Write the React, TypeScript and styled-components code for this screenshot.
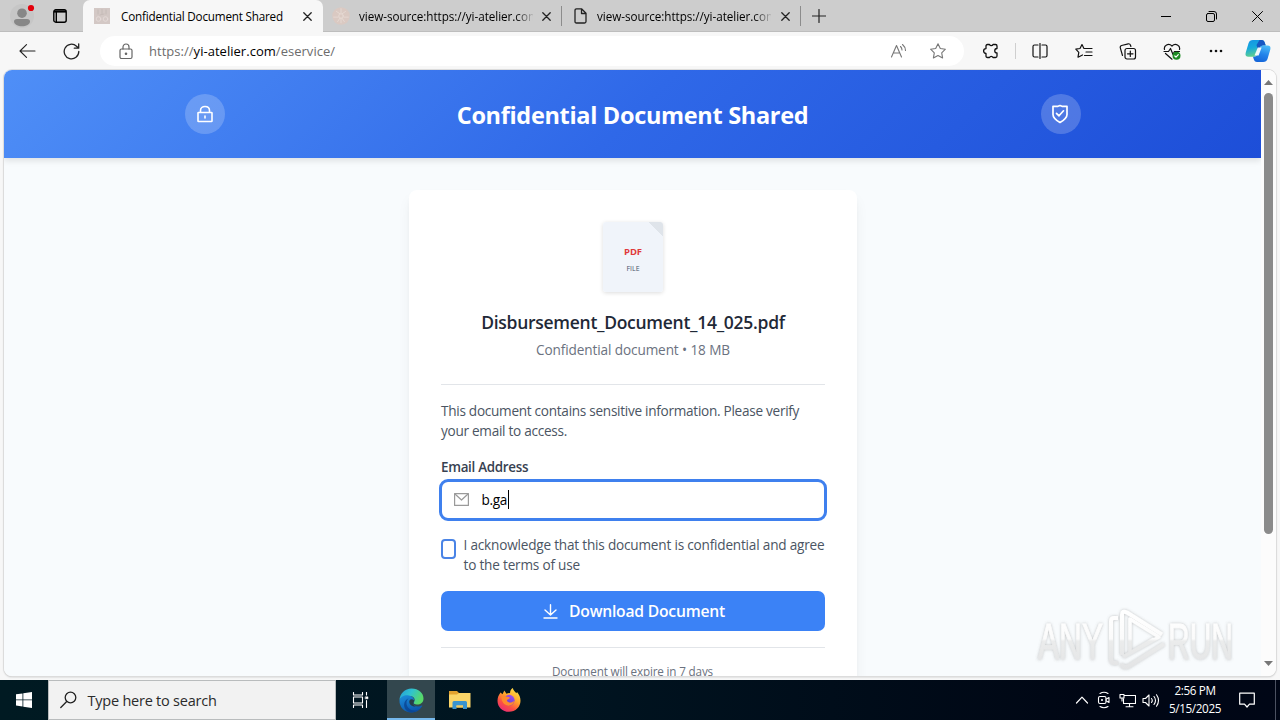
import React from "react";
import styled, { createGlobalStyle } from "styled-components";

const GlobalStyle = createGlobalStyle`
  * { box-sizing: border-box; }
  body { margin: 0; overflow: hidden; font-family: "Open Sans", "Noto Sans", sans-serif; }
  svg { display: block; flex: none; }
`;

const Screen = styled.div`
  width: 1280px;
  height: 720px;
  display: flex;
  flex-direction: column;
  background: #f7f7f7;
  overflow: hidden;
`;

/* Browser chrome */
const TabStrip = styled.div`
  height: 32px;
  flex: none;
  display: flex;
  background: #cdcdcd;
  box-shadow: inset 0 -1px 0 #bdbdbd;
`;
const ProfileArea = styled.div`
  width: 83px;
  display: flex;
  align-items: center;
  padding-left: 10px;
  gap: 18px;
`;
const Tab = styled.div<{ $active?: boolean; $width: number; $gap: number; $pad: number }>`
  width: ${(p) => p.$width}px;
  height: 32px;
  display: flex;
  align-items: center;
  padding: 0 ${(p) => (p.$active ? 11 : 10)}px 0 ${(p) => p.$pad}px;
  gap: ${(p) => p.$gap}px;
  background: ${(p) => (p.$active ? "#f7f7f7" : "transparent")};
  border-radius: ${(p) => (p.$active ? "7px 7px 0 0" : "0")};
  color: #000;
`;
const TabTitle = styled.span<{ $fade?: boolean }>`
  flex: 1;
  overflow: hidden;
  white-space: nowrap;
  font-size: 11.7px;
  line-height: 18px;
  letter-spacing: ${(p) => (p.$fade ? -0.05 : -0.2)}px;
  ${(p) => p.$fade && "mask-image: linear-gradient(to right, #000 90%, transparent 101%);"}
`;
const TabDivider = styled.i`
  width: 1px;
  height: 20px;
  margin-top: 6px;
  background: #8c8c8c;
`;
const NewTab = styled.div`
  display: flex;
  align-items: center;
  padding-left: 11px;
`;
const WindowButtons = styled.div`
  margin-left: auto;
  display: flex;
  align-items: center;
  gap: 35px;
  padding-right: 17px;
`;

const Toolbar = styled.div`
  height: 38px;
  flex: none;
  display: flex;
  align-items: center;
`;
const NavButtons = styled.div`
  width: 100px;
  display: flex;
  align-items: center;
  gap: 27px;
  padding-left: 19px;
`;
const AddressBar = styled.div`
  width: 864px;
  height: 30px;
  border-radius: 15px;
  background: #fff;
  display: flex;
  align-items: center;
  padding: 0 18px 0 18px;
`;
const Url = styled.span`
  margin-left: 15px;
  flex: 1;
  font-size: 13px;
  line-height: 20px;
  letter-spacing: 0.03px;
  color: #6c6c6c;
  b { font-weight: 400; color: #000; }
`;
const BarIcons = styled.div`
  display: flex;
  gap: 22px;
`;
const ToolIcons = styled.div`
  flex: 1;
  display: flex;
  align-items: center;
`;
const ToolSlot = styled.span<{ $lead?: boolean }>`
  width: ${(p) => (p.$lead ? 51 : 44)}px;
  padding-left: ${(p) => (p.$lead ? 3 : 0)}px;
  display: flex;
  justify-content: center;
`;
const ToolDivider = styled.i`
  width: 1px;
  height: 16px;
  margin-right: 2px;
  background: #cfcfcf;
`;
const CopilotSlot = styled.span`
  margin-left: 7px;
`;

/* Web page viewport */
const Viewport = styled.div`
  width: 1272px;
  height: 606px;
  flex: none;
  margin-left: 4px;
  display: flex;
  position: relative;
  border-radius: 8px;
  overflow: hidden;
  box-shadow: 0 0 0 1px #dcdcdc, 0 1px 2px #b8b8b8;
  background: #fff;
`;
const Frame = styled.div`
  height: 610px;
  flex: none;
`;
const Page = styled.div`
  width: 1257px;
  height: 606px;
  background: #f8fbfd;
  overflow: hidden;
  display: flex;
  flex-direction: column;
  align-items: center;
`;
const PageHeader = styled.header`
  width: 100%;
  height: 88px;
  flex: none;
  display: flex;
  align-items: center;
  justify-content: space-between;
  padding: 0 180px 0 181px;
  color: #fff;
  background: linear-gradient(135deg, #4f8ff7 0%, #2f68e8 50%, #1d4ed8 100%);
  box-shadow: 0 3px 6px rgba(0, 0, 0, 0.1);
`;
const HeaderBadge = styled.div`
  width: 40px;
  height: 40px;
  border-radius: 50%;
  display: grid;
  place-items: center;
  padding-right: 1px;
  background: rgba(255, 255, 255, 0.2);
`;
const HeaderTitle = styled.h1`
  margin: 1px 1px 0 0;
  font-size: 23.5px;
  line-height: 32px;
  font-weight: 700;
  letter-spacing: -0.32px;
`;
const Card = styled.main`
  width: 448px;
  height: 560px;
  flex: none;
  margin-top: 32px;
  padding: 32px 32px 0;
  border-radius: 8px;
  background: #fff;
  box-shadow: 0 8px 15px -3px rgba(0, 0, 0, 0.08), 0 4px 6px -2px rgba(0, 0, 0, 0.04);
  display: flex;
  flex-direction: column;
`;
const FileIcon = styled.div`
  width: 60px;
  height: 70px;
  margin: 0 auto;
  border-radius: 3px;
  background: linear-gradient(225deg, #dfe4ea 0 10px, #f0f4fa 10.5px);
  box-shadow: 0 1px 4px rgba(0, 0, 0, 0.14);
  display: flex;
  flex-direction: column;
  align-items: center;
  padding: 23px 0 0 1px;
`;
const FileKind = styled.span`
  font-size: 9.5px;
  line-height: 14px;
  font-weight: 700;
  letter-spacing: -0.1px;
  color: #e03a3a;
`;
const FileWord = styled.span`
  margin-top: 3px;
  font-size: 7px;
  line-height: 13px;
  color: #475569;
`;
const FileName = styled.h2`
  margin: 16px 0 0 1px;
  text-align: center;
  font-size: 17.5px;
  line-height: 28px;
  font-weight: 570;
  letter-spacing: -0.28px;
  color: #1f2937;
  white-space: nowrap;
`;
const FileMeta = styled.p`
  margin: 4px 0 0 1px;
  text-align: center;
  font-size: 13.6px;
  line-height: 20px;
  letter-spacing: -0.11px;
  color: #6b7280;
`;
const Rule = styled.hr<{ $top: number }>`
  width: 100%;
  height: 1px;
  flex: none;
  margin: ${(p) => p.$top}px 0 0;
  border: 0;
  background: #e2e5e9;
`;
const Notice = styled.p`
  margin: 16px 0 0 0.5px;
  font-size: 13.6px;
  line-height: 20px;
  letter-spacing: -0.28px;
  color: #4b5563;
`;
const Label = styled.label`
  margin: 16px 0 0 0.5px;
  font-size: 13.4px;
  line-height: 20px;
  font-weight: 600;
  letter-spacing: -0.3px;
  color: #374151;
`;
const Field = styled.div`
  height: 42px;
  flex: none;
  margin: 2px -2px 0;
  border: 3px solid #3f80ee;
  border-radius: 9px;
  display: flex;
  align-items: center;
  padding: 0 0 2px 12px;
`;
const FieldValue = styled.span`
  margin-left: 13px;
  padding-right: 1px;
  border-right: 1px solid #000;
  font-size: 13.6px;
  line-height: 19px;
  letter-spacing: -0.3px;
  color: #000;
`;
const CheckRow = styled.div`
  display: flex;
  gap: 8px;
  margin-top: 14px;
`;
const CheckBox = styled.span`
  width: 15px;
  height: 20px;
  flex: none;
  margin-top: 4px;
  border: 2px solid #4a84e6;
  border-radius: 4px;
`;
const CheckText = styled.span`
  font-size: 13.6px;
  line-height: 20px;
  letter-spacing: -0.2px;
  color: #4b5563;
  white-space: nowrap;
`;
const DownloadButton = styled.div`
  height: 40px;
  flex: none;
  margin-top: 16px;
  border-radius: 7px;
  background: #3b82f6;
  color: #fff;
  display: flex;
  align-items: center;
  justify-content: center;
  gap: 11px;
  padding: 0 0 0 3px;
  font-size: 15.7px;
  font-weight: 540;
  letter-spacing: -0.22px;
`;
const Expiry = styled.p`
  margin: 15px 0 0;
  text-align: center;
  font-size: 11.7px;
  line-height: 16px;
  letter-spacing: -0.17px;
  color: #6b7280;
`;
const Scrollbar = styled.div`
  width: 15px;
  height: 606px;
  background: #fcfcfc;
  display: flex;
  flex-direction: column;
  align-items: center;
  justify-content: space-between;
  padding: 10px 0;
`;
const Thumb = styled.i`
  width: 9px;
  height: 441px;
  border-radius: 5px;
  background: #8b8b8b;
  margin-bottom: 120px;
`;
const Watermark = styled.div`
  position: absolute;
  left: 1025px;
  top: 531px;
`;

/* Taskbar */
const Taskbar = styled.div`
  height: 40px;
  flex: none;
  display: flex;
  align-items: stretch;
  background: linear-gradient(to right, #001a22, #001420 45%, #000614 85%, #000616);
`;
const TaskButton = styled.div<{ $width: number; $active?: boolean }>`
  width: ${(p) => p.$width}px;
  display: grid;
  place-items: center;
  background: ${(p) => (p.$active ? "#33474e" : "transparent")};
  box-shadow: ${(p) => (p.$active ? "inset 0 -2px 0 #76b9ed" : "none")};
`;
const SearchBox = styled.div`
  width: 288px;
  display: flex;
  align-items: center;
  gap: 10.5px;
  padding-left: 11px;
  background: #f2f2f2;
  border: 1px solid #b9bcbd;
  color: #2b2b2b;
  font-size: 14.5px;
  letter-spacing: -0.23px;
`;
const Tray = styled.div`
  margin-left: auto;
  display: flex;
  align-items: center;
  color: #fff;
`;
const Clock = styled.div`
  width: 62px;
  height: 40px;
  margin-left: 4px;
  padding-top: 1px;
  display: flex;
  flex-direction: column;
  align-items: center;
  font-size: 11.7px;
  line-height: 18px;
  letter-spacing: -0.35px;
`;
const TrayIcons = styled.div`
  display: flex;
  align-items: center;
  gap: 6.5px;
`;
const Notifications = styled.div`
  width: 49px;
  padding-left: 13px;
`;
const DesktopEdge = styled.i`
  width: 1px;
  height: 40px;
  margin-right: 4px;
  background: #4b5161;
`;

type IconProps = { w?: number; h?: number; box?: string; color?: string; sw?: number; children: React.ReactNode };
const Icon = ({ w = 16, h = w, box = `0 0 ${w} ${h}`, color = "#111", sw = 1.1, children }: IconProps) => (
  <svg width={w} height={h} viewBox={box} fill="none" stroke={color} strokeWidth={sw} strokeLinejoin="round" strokeLinecap="round">
    {children}
  </svg>
);

const CloseIcon = () => (
  <Icon w={9} sw={1.3} color="#222"><path d="M.8.8l7.4 7.4M8.2.8L.8 8.2" /></Icon>
);
const Profile = () => (
  <Icon w={25} h={26} color="none">
    <circle cx="12" cy="13" r="12" fill="#c6c6c6" />
    <circle cx="12" cy="10.2" r="4.8" fill="#878787" />
    <path d="M4 18.5q0-2.5 3-2.5h10q3 0 3 2.5c0 3-4 4.800-8 4.800s-8-1.800-8-4.800z" fill="#878787" />
    <circle cx="21" cy="5" r="3.100" fill="#e3000b" />
  </Icon>
);
const Workspaces = () => (
  <Icon w={14} h={14} color="#000" sw={1.4}>
    <rect x=".8" y=".8" width="12.400" height="12.400" rx="2" />
    <path d="M1 2.500h12" strokeWidth="2.200" strokeLinecap="butt" />
    <path d="M3.300 3v10" strokeWidth="1.400" strokeLinecap="butt" />
  </Icon>
);
const SquareFavicon = () => (
  <Icon w={16} color="#e6dcd9" sw={0.8}>
    <rect width="16" height="16" fill="#d3c8c5" stroke="none" />
    <circle cx="4.500" cy="11" r="2.300" />
    <circle cx="11.500" cy="11" r="2.300" />
    <path d="M4 2v4M8 1.500v4M12 2v4M6 7l4-1" stroke="#c2b7b4" />
  </Icon>
);
const RoundFavicon = () => (
  <Icon w={18} box="0 0 16 16" color="#e8dcd6" sw={0.7}>
    <circle cx="8" cy="8" r="7.800" fill="#dac9c2" stroke="none" />
    <path d="M4 4l3 2M8 1.500v4M12 4L9 6M1.500 9h4M10.500 9h4M5 13l2-3M11 13L9 10M8 10v4" />
    <circle cx="8" cy="8" r="2" />
  </Icon>
);
const PageFavicon = () => (
  <Icon w={13} h={16} color="#222" sw={1.3}><path d="M2.500.8h5L12 5.300v8.200q0 1.500-1.500 1.500h-8Q1 15 1 13.500v-11Q1 .8 2.500.8zM7.500 1v4.500H12" /></Icon>
);

const Copilot = () => (
  <svg width="26" height="24" viewBox="0 0 26 24">
    <defs>
      <linearGradient id="cpA" x1="0" y1="0" x2=".3" y2="1">
        <stop offset="0" stopColor="#1593e6" /><stop offset=".5" stopColor="#16a9dc" /><stop offset="1" stopColor="#5fd08f" />
      </linearGradient>
      <linearGradient id="cpB" x1=".6" y1="0" x2=".3" y2="1">
        <stop offset="0" stopColor="#48b8f7" /><stop offset=".5" stopColor="#2384ea" /><stop offset="1" stopColor="#1464d8" />
      </linearGradient>
    </defs>
    <path d="M8 1h8.500c2 0 2.800 1 3.400 3l.8 2.400h-2.500c-2 0-3 .8-3.600 2.800L12.500 15c-.7 2-1.600 2.700-3.500 2.700H3.500c-2.500 0-3.500-1.600-2.800-4L3.600 4C4.300 2 5.500 1 8 1z" fill="url(#cpA)" />
    <path d="M14.500 1h2c2 0 2.800 1 3.400 3l.8 2.400h-2.500c-2 0-3 .8-3.600 2.800L13.500 12 11.500 6z" fill="#1757c2" />
    <path d="M18.300 6.400h4.200c2.500 0 3.500 1.600 2.800 4L22.500 20c-.7 2-1.900 3-4.400 3h-6c-2 0-2.800-1-3.400-3L8 17.700h1c1.900 0 2.800-.7 3.500-2.700l2.100-5.800c.6-2 1.700-2.800 3.700-2.800z" fill="url(#cpB)" />
    <path d="M12.800 8.500h3.800l-3 8H9.500z" fill="#fff" opacity=".92" />
  </svg>
);

const Edge = () => (
  <svg width="25" height="25" viewBox="0 0 25 25">
    <defs>
      <linearGradient id="egT" x1="0" y1="0" x2="1" y2=".4">
        <stop offset="0" stopColor="#249bd8" /><stop offset=".5" stopColor="#30c2cf" /><stop offset="1" stopColor="#58d968" />
      </linearGradient>
      <linearGradient id="egB" x1="0" y1="0" x2=".5" y2="1">
        <stop offset="0" stopColor="#1d8fdc" /><stop offset="1" stopColor="#0b56ad" />
      </linearGradient>
    </defs>
    <path d="M.5 12.500C.5 5.500 6 .5 12.500.5 19.500.5 24.500 5 24.500 10.500c0 4-3 6-6.500 6-2.500 0-4-1-3-2.500 1.800-2.500 0-6-4.500-6C5 8 1 10 .5 12.500z" fill="url(#egT)" />
    <path d="M.5 12.500C1.500 8.500 5.500 7 8.500 7.300c4.500.2 7.300 3.400 6.700 6-.4 1.200-1.200 1.300-1 2.400.8 2.600 5 3.600 8.500 1.800.5-.2.8.1.5.6-2 3.800-6 6.400-10.700 6.400C5.500 24.500.3 19 .5 12.500z" fill="url(#egB)" />
    <path d="M9.500 10.500c-2.500 2-2.800 6.500 0 9.500 2.600 2.900 7.500 3.400 11 1-2 2.200-5 3.500-8 3.500C7 24.300 4 19 5.500 14.500c.8-2 2.200-3.500 4-4z" fill="#0a4491" opacity=".8" />
    <path d="M10.500 12.500c1-1.500 3-1.600 4.500-.2.500 1.200-.8 2-.8 3.400.3 1.400 1.600 2.400 3.300 2.800-4.500.8-8.200-2.700-7-6z" fill="#263d48" />
  </svg>
);

const Explorer = () => (
  <svg width="22" height="20" viewBox="0 0 22 20">
    <path d="M0 1h8l2 2h11v5H0z" fill="#e3a22f" />
    <path d="M0 4.500h8L10 3h11.500v14.500H0z" fill="#fbd568" />
    <path d="M3.500 19v-6.500q0-1.500 1.500-1.500h11.500q1.500 0 1.500 1.500V19h-4v-3.500H7.500V19z" fill="#3a94cf" />
    <path d="M7.500 17.500v-2H14v2z" fill="#f4cb5e" />
  </svg>
);

const Firefox = () => (
  <svg width="24" height="24" viewBox="0 0 24 24">
    <defs>
      <linearGradient id="ffA" x1=".8" y1="0" x2=".2" y2="1">
        <stop offset="0" stopColor="#ffe14a" /><stop offset=".4" stopColor="#ffa52b" /><stop offset=".7" stopColor="#fb4f43" /><stop offset="1" stopColor="#e8277c" />
      </linearGradient>
      <linearGradient id="ffB" x1=".7" y1="0" x2=".3" y2="1">
        <stop offset="0" stopColor="#a04df0" /><stop offset="1" stopColor="#5a3fd0" />
      </linearGradient>
    </defs>
    <path d="M3.500 4.500l2 1.800 1.800-3.800 2.200 3.200c1-.5 2.500-.8 3.500-.5 0-2.200.8-4 2.800-5.200.4 2.500 2 3.200 3.600 5.200l.6-1.200c2.200 2.400 3.500 5.500 3.500 8.800C23.500 19 18.500 23.800 12 23.800S.5 19 .5 12.700c0-3.200 1.200-5.700 3-8.200z" fill="url(#ffA)" />
    <circle cx="12.200" cy="12.200" r="5.400" fill="url(#ffB)" />
    <path d="M4.500 8.500c2-1.300 4-.7 5 .3 1.500 0 3 .2 3.500 1-.8 1.700-3 1.200-3.200 2.800 1 2.400 5 2.800 7.500.2-.8 4-4 5.500-7 4.700-3.500-.9-6-4-5.800-9z" fill="#ff8a2c" />
  </svg>
);

const AnyRun = () => (
  <svg width="212" height="74" viewBox="0 0 212 74">
    <defs>
      <linearGradient id="wm" gradientUnits="userSpaceOnUse" x1="0" y1="10" x2="0" y2="68">
        <stop offset="0" stopColor="#ffffff" /><stop offset=".48" stopColor="#fbfbfb" /><stop offset=".52" stopColor="#ebecec" /><stop offset="1" stopColor="#e3e4e5" />
      </linearGradient>
      <filter id="wmShadow" x="-10%" y="-10%" width="120%" height="120%">
        <feDropShadow dx="0" dy="0" stdDeviation="1.500" floodColor="#777" floodOpacity=".45" />
      </filter>
    </defs>
    <g filter="url(#wmShadow)" fill="url(#wm)">
      <g stroke="url(#wm)" strokeWidth=".8">
        <text x="9" y="58" fontFamily="Liberation Sans Narrow, Liberation Sans" fontSize="50" textLength="65" lengthAdjust="spacingAndGlyphs">ANY</text>
        <text x="139" y="58" fontFamily="Liberation Sans Narrow, Liberation Sans" fontSize="50" textLength="65" lengthAdjust="spacingAndGlyphs">RUN</text>
      </g>
      <g fill="none" stroke="url(#wm)" strokeWidth="4" strokeLinejoin="round">
        <path d="M89 17h-4q-3 0-3 3v38q0 4 4 4h3" />
        <path d="M93 54V14q0-5 5-2.500l35 22" />
        <path d="M94 56l36-20L101 18v34l24-14" strokeWidth="3.500" />
        <path d="M92 63q3 5 8 2l35-22" />
      </g>
    </g>
  </svg>
);

export default function App() {
  return (
    <Screen>
      <GlobalStyle />
      <TabStrip>
        <ProfileArea><Profile /><Workspaces /></ProfileArea>
        <Tab $active $width={240} $gap={11} $pad={11}>
          <SquareFavicon />
          <TabTitle>Confidential Document Shared</TabTitle>
          <CloseIcon />
        </Tab>
        <Tab $width={238} $gap={9} $pad={9}>
          <RoundFavicon />
          <TabTitle $fade>view-source:https://yi-atelier.com/eservice/</TabTitle>
          <CloseIcon />
        </Tab>
        <TabDivider />
        <Tab $width={238} $gap={10} $pad={12}>
          <PageFavicon />
          <TabTitle $fade>view-source:https://yi-atelier.com/eservice/</TabTitle>
          <CloseIcon />
        </Tab>
        <TabDivider />
        <NewTab><Icon w={14} color="#222" sw={1.2}><path d="M7 .5v13M.5 7h13" /></Icon></NewTab>
        <WindowButtons>
          <Icon w={10} color="#000" sw={1}><path d="M0 5.500h10" /></Icon>
          <Icon w={11} color="#000" sw={1}><rect x=".5" y="2.500" width="8" height="8" rx="1.500" /><path d="M3 .5h5q2.500 0 2.500 2.500v5" /></Icon>
          <Icon w={11} color="#000" sw={1}><path d="M.5.5l10 10M10.500.5l-10 10" /></Icon>
        </WindowButtons>
      </TabStrip>

      <Toolbar>
        <NavButtons>
          <Icon w={17} h={14} color="#222" sw={1.1}><path d="M16 7H1M7.500.7L1 7l6.500 6.300" /></Icon>
          <Icon w={17} color="#222" sw={1.300}><path d="M15.800 8.500A7.300 7.300 0 1 1 13.500 3.200L15.500 5M15.700.8V5.200H11.300" /></Icon>
        </NavButtons>
        <AddressBar>
          <Icon w={16} h={17} color="#666" sw={1.2}><rect x="2" y="6" width="12" height="9.500" rx="1.500" /><path d="M5 6V4a3 3 0 0 1 6 0v2" /><circle cx="8" cy="10.800" r=".7" fill="#666" /></Icon>
          <Url>https://<b>yi-atelier.com</b>/eservice/</Url>
          <BarIcons>
            <Icon w={18} h={16} color="#777"><path d="M1.500 14L6.500 2.500 11.500 14M3.300 10h6.500M10.500 3.500q1.500 1.500 1.500 3.500M12.500 1.500Q15.500 4 15.500 7.500" /></Icon>
            <Icon w={16} color="#777"><path d="M8 .8l2.300 4.700 5.100.7-3.700 3.600.9 5.100L8 12.500l-4.600 2.400.9-5.100L.6 6.200l5.100-.7z" /></Icon>
          </BarIcons>
        </AddressBar>
        <ToolIcons>
          <ToolSlot $lead><Icon w={18} h={16} sw={1.3}><path d="M5.500 1.500h2a1.900 1.900 0 0 0 3.500 0h2.500q1.500 0 1.500 1.500v2.500a2.200 2.200 0 0 0 0 4.500v3q0 1.500-1.500 1.500H11a1.900 1.900 0 0 0-3.500 0h-2Q4 14.500 4 13v-2.600a2.400 2.400 0 0 1 0-4.800V3Q4 1.500 5.500 1.500z" /></Icon></ToolSlot>
          <ToolDivider />
          <ToolSlot><Icon w={16} h={16} sw={1.2}><path d="M6 2H2.500Q1 2 1 3.500v9Q1 14 2.500 14H6M10 2h3.500Q15 2 15 3.500v9q0 1.500-1.500 1.500H10M8 .5v15" /></Icon></ToolSlot>
          <ToolSlot><Icon w={18} h={16} sw={1.2}><path d="M10.300 5.500L8.800 5.300 7 1.500 5 5.500l-4.200.7 3 3.200-.8 4.800L7.500 12M10.500 5.500h6.500M11 9h6M9.500 12.500H17" /></Icon></ToolSlot>
          <ToolSlot><Icon w={18} h={17} sw={1.200}><rect x="6" y="5.500" width="10.500" height="10.500" rx="2" /><path d="M11.300 8v5.500M8.500 10.800h5.500M3.500 12.500L1.300 4.800q-.4-1.800 1.300-2.300l6.600-1.700q1.700-.3 2.300 1.400l.4 1.300" /></Icon></ToolSlot>
          <ToolSlot><Icon w={18} h={17} sw={1.2}><path d="M1.500 6.500C.5 2.500 5.500-.5 9 3c3.500-3.500 8.500-.5 7.500 3.500M1 8.500h4.500L7.500 5.500l2.500 6 1.500-3h5M2.500 10.500L9 16.200" /><circle cx="13.500" cy="12.800" r="4" fill="#1c8a22" stroke="none" /><path d="M11.800 13l1.200 1.200 2.300-2.500" stroke="#fff" /></Icon></ToolSlot>
          <ToolSlot><Icon w={16} h={4} color="none"><circle cx="3" cy="2" r="1.300" fill="#111" /><circle cx="8" cy="2" r="1.300" fill="#111" /><circle cx="13" cy="2" r="1.300" fill="#111" /></Icon></ToolSlot>
          <CopilotSlot><Copilot /></CopilotSlot>
        </ToolIcons>
      </Toolbar>

      <Frame>
        <Viewport>
          <Page>
            <PageHeader>
              <HeaderBadge>
                <Icon w={18} h={18} color="#fff" sw={1.6}><rect x="2" y="7.500" width="14" height="9" rx=".5" /><path d="M4.500 7V5.500C4.500 3 6.500 1.500 9 1.500s4.500 1.500 4.500 4V7M9 11v2" /></Icon>
              </HeaderBadge>
              <HeaderTitle>Confidential Document Shared</HeaderTitle>
              <HeaderBadge>
                <Icon w={18} h={20} color="#fff" sw={1.7}><path d="M9 1.500l2 .8h5v8.200c0 3.500-3.500 6-7 8-3.500-2-7-4.500-7-8V2.300h5z" /><path d="M5.500 9.300L8 11.800l4.500-5" /></Icon>
              </HeaderBadge>
            </PageHeader>
            <Card>
              <FileIcon><FileKind>PDF</FileKind><FileWord>FILE</FileWord></FileIcon>
              <FileName>Disbursement_Document_14_025.pdf</FileName>
              <FileMeta>Confidential document • 18 MB</FileMeta>
              <Rule $top={24} />
              <Notice>This document contains sensitive information. Please verify<br />your email to access.</Notice>
              <Label>Email Address</Label>
              <Field>
                <Icon w={15} h={13} color="#9a9a9a" sw={1.2}><rect x=".6" y=".6" width="13.800" height="11.800" /><path d="M1 1l6.500 6L14 1" /></Icon>
                <FieldValue>b.ga</FieldValue>
              </Field>
              <CheckRow>
                <CheckBox />
                <CheckText>I acknowledge that this document is confidential and agree<br />to the terms of use</CheckText>
              </CheckRow>
              <DownloadButton>
                <Icon w={15} h={15} color="#fff" sw={1.4}><path d="M7.500.8v10M2 6l5.500 5L13 6M1 14h13" /></Icon>
                <span>Download Document</span>
              </DownloadButton>
              <Rule $top={16} />
              <Expiry>Document will expire in 7 days</Expiry>
            </Card>
          </Page>
          <Scrollbar>
            <Icon w={9} h={5} color="none"><path d="M0 5h9L4.500 0z" fill="#777" /></Icon>
            <Thumb />
            <Icon w={9} h={5} color="none"><path d="M0 0h9L4.500 5z" fill="#777" /></Icon>
          </Scrollbar>
          <Watermark><AnyRun /></Watermark>
        </Viewport>
      </Frame>

      <Taskbar>
        <TaskButton $width={48}>
          <svg width="16" height="16" viewBox="0 0 16 16" fill="#fff"><path d="M0 2.300l6.500-.9v6.100H0zM7.300 1.200L16 0v7.500H7.300zM0 8.300h6.500v6.200L0 13.600zM7.300 8.300H16V16l-8.700-1.300z" /></svg>
        </TaskButton>
        <SearchBox>
          <Icon w={17} h={18} color="#222" sw={1.3}><circle cx="10.500" cy="6.500" r="5.300" /><path d="M6.700 10.500L.8 16.500" /></Icon>
          Type here to search
        </SearchBox>
        <TaskButton $width={51}>
          <Icon w={19} h={16} color="#fff" sw={1.1}><path d="M1.500.5v2.500h9V.5M1.500 15.500V13h9v2.500M1.500 5h9v6h-9zM14.500 0v3M14.500 8.500v7" /><rect x="13.500" y="4.800" width="2.500" height="2" fill="#fff" strokeWidth=".5" /></Icon>
        </TaskButton>
        <TaskButton $width={48} $active><Edge /></TaskButton>
        <TaskButton $width={49}><Explorer /></TaskButton>
        <TaskButton $width={49}><Firefox /></TaskButton>
        <Tray>
          <TrayIcons>
            <Icon w={14} h={8} color="#fff" sw={1.2}><path d="M1.500 7L7 1.200 12.500 7" /></Icon>
            <Icon w={17} h={18} color="#fff" sw={1.1}><path d="M5 2.500q4-2.500 8 0M5 15.500q4 2.500 8 0" /><rect x="3.500" y="5.500" width="7.500" height="7" rx="1.500" /><path d="M11 8.200l3-1.700v5l-3-1.700" /><circle cx="7" cy="9" r=".5" /></Icon>
            <Icon w={17} h={15} color="#fff" sw={1.1} box="0 0 17 15"><path d="M5.500 2.500h11v8H4.500V6M10.500 10.500v3M7 13.800h7M1 1.500h4v3.500H1zM3 5v3" /></Icon>
            <Icon w={18} h={15} color="#fff" sw={1.1}><path d="M1 5.500h2.500L7 2v11L3.500 9.500H1zM9.500 5.500q1.500 2 0 4M12 3.500q3 4 0 8M14.500 1.800q4 5.700 0 11.400" /></Icon>
          </TrayIcons>
          <Clock><span>2:56 PM</span><span>5/15/2025</span></Clock>
          <Notifications>
            <Icon w={16} h={16} color="#fff" sw={1.2}><path d="M.7 1.200h14.600v11h-4.800L8 15l-2.500-2.800H.7z" /></Icon>
          </Notifications>
          <DesktopEdge />
        </Tray>
      </Taskbar>
    </Screen>
  );
}
